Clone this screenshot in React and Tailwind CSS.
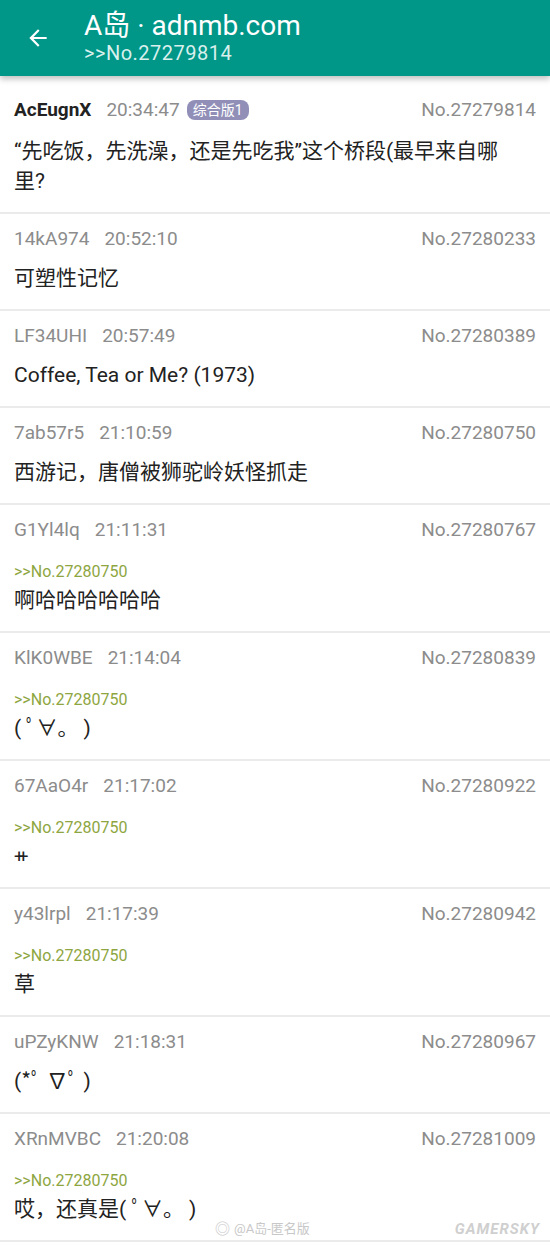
const POSTS = [
  { id: '14kA974', time: '20:52:10', no: '27280233', text: '可塑性记忆' },
  { id: 'LF34UHI', time: '20:57:49', no: '27280389', text: 'Coffee, Tea or Me? (1973)' },
  { id: '7ab57r5', time: '21:10:59', no: '27280750', text: '西游记，唐僧被狮驼岭妖怪抓走' },
  { id: 'G1Yl4lq', time: '21:11:31', no: '27280767', ref: '27280750', text: '啊哈哈哈哈哈哈' },
  { id: 'KlK0WBE', time: '21:14:04', no: '27280839', ref: '27280750', text: '( ﾟ∀。 )' },
  { id: '67AaO4r', time: '21:17:02', no: '27280922', ref: '27280750', text: '++', tiny: true },
  { id: 'y43lrpl', time: '21:17:39', no: '27280942', ref: '27280750', text: '草' },
  { id: 'uPZyKNW', time: '21:18:31', no: '27280967', text: '(*ﾟ ∇ﾟ )' },
  { id: 'XRnMVBC', time: '21:20:08', no: '27281009', ref: '27280750', text: '哎，还真是( ﾟ∀。 )' },
]

function BackArrow() {
  return (
    <svg width="26" height="26" viewBox="0 0 24 24" fill="white">
      <path d="M20 11H7.83l5.59-5.59L12 4l-8 8 8 8 1.41-1.41L7.83 13H20v-2z" />
    </svg>
  )
}

function Post({ p }) {
  return (
    <div className="border-b-2 border-[#ebebeb] px-[14px] pt-[13px] pb-[16px]">
      <div className="flex h-[24px] items-center justify-between text-[19px] text-[#8c8c8c]">
        <div className="flex items-center gap-[15px]">
          <span>{p.id}</span>
          <span>{p.time}</span>
        </div>
        <span>No.{p.no}</span>
      </div>
      {p.ref && (
        <div className="mt-[17px] text-[16px] leading-[26px] text-[#8ea63f]">&gt;&gt;No.{p.ref}</div>
      )}
      <div className={(p.ref ? 'mt-0' : 'mt-[12px]') + ' h-[30px] text-[21px] leading-[30px] text-[#222]'}>
        {p.tiny ? <span className="text-[18px] tracking-[-6px]">{p.text}</span> : p.text}
      </div>
    </div>
  )
}

export default function App() {
  return (
    <div className="relative h-[1248px] w-[550px] overflow-hidden bg-white font-['Roboto','Noto_Sans_CJK_SC',sans-serif]">
      <div className="relative z-10 flex h-[76px] items-center bg-[#009688] shadow-[0_3px_6px_rgba(0,0,0,0.25)]">
        <div className="ml-[25px] flex w-[59px] items-center">
          <BackArrow />
        </div>
        <div className="flex flex-col text-white">
          <div className="text-[28px] leading-[30px]">A岛 · adnmb.com</div>
          <div className="text-[20px] leading-[24px] tracking-[0.5px] text-[#d9f0ed]">&gt;&gt;No.27279814</div>
        </div>
      </div>

      <div className="border-b-2 border-[#ebebeb] px-[14px] pt-[22px] pb-[16px]">
        <div className="flex h-[24px] items-center justify-between text-[19px] text-[#8c8c8c]">
          <div className="flex items-center">
            <span className="font-bold text-[#222]">AcEugnX</span>
            <span className="ml-[15px]">20:34:47</span>
            <span className="ml-[7px] rounded-[8px] bg-[#918fb8] px-[6px] text-[14px] leading-[20px] text-white">综合版1</span>
          </div>
          <span>No.27279814</span>
        </div>
        <div className="mt-[14px] text-[21px] leading-[30px] text-[#222]">
          “先吃饭，先洗澡，还是先吃我”这个桥段(最早来自哪<br />里?
        </div>
      </div>

      {POSTS.map((p) => (
        <Post key={p.no} p={p} />
      ))}

      <div className="absolute bottom-[8px] left-[215px] flex items-center gap-[4px] text-[13px] text-[#c8c8c8]">
        <span className="text-[15px]">◎</span>
        <span>@A岛-匿名版</span>
      </div>
      <div className="absolute bottom-[8px] right-[10px] text-[15px] font-bold italic tracking-[1px] text-[#cfcfcf]">GAMERSKY</div>
    </div>
  )
}
